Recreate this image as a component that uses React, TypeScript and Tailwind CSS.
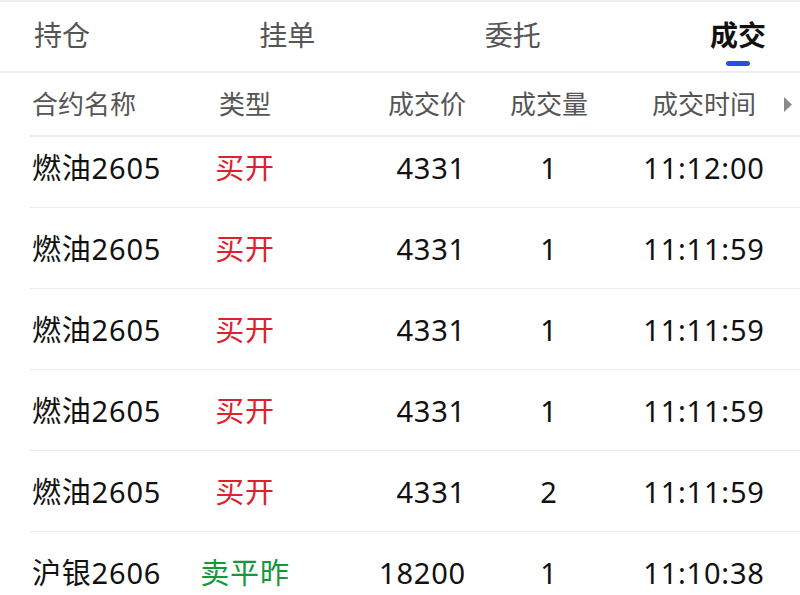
type Trade = { name: string; side: string; buy: boolean; price: string; qty: string; time: string };

const tabs = ['持仓', '挂单', '委托', '成交'];

const trades: Trade[] = [
  { name: '燃油2605', side: '买开', buy: true, price: '4331', qty: '1', time: '11:12:00' },
  { name: '燃油2605', side: '买开', buy: true, price: '4331', qty: '1', time: '11:11:59' },
  { name: '燃油2605', side: '买开', buy: true, price: '4331', qty: '1', time: '11:11:59' },
  { name: '燃油2605', side: '买开', buy: true, price: '4331', qty: '1', time: '11:11:59' },
  { name: '燃油2605', side: '买开', buy: true, price: '4331', qty: '2', time: '11:11:59' },
  { name: '沪银2606', side: '卖平昨', buy: false, price: '18200', qty: '1', time: '11:10:38' },
  { name: '沪银2606', side: '卖平昨', buy: false, price: '18200', qty: '1', time: '11:10:38' },
];

export default function App() {
  return (
    <div className="h-[595px] w-[800px] overflow-hidden bg-white font-['Noto_Sans','Noto_Sans_CJK_SC',sans-serif]">
      {/* tabs */}
      <div className="flex h-[73px] items-center justify-between border-y-2 border-[#ededed] px-[34px]">
        {tabs.map((t, i) => {
          const active = i === tabs.length - 1;
          return (
            <div key={t} className="relative">
              <span className={`text-[28px] leading-none ${active ? 'font-bold text-[#111]' : 'text-[#555]'}`}>{t}</span>
              {active && (
                <span className="absolute left-1/2 top-[40px] h-[5px] w-[24px] -translate-x-1/2 rounded-full bg-[#2a4fe0]" />
              )}
            </div>
          );
        })}
      </div>

      {/* column header */}
      <div className="ml-[30px] flex h-[64px] items-center border-b-2 border-[#ececec] text-[26px] text-[#555]">
        <div className="w-[150px] pl-[2px]">合约名称</div>
        <div className="w-[130px] text-center">类型</div>
        <div className="w-[156px] text-right">成交价</div>
        <div className="w-[166px] text-center">成交量</div>
        <div className="w-[144px] text-center">成交时间</div>
        <svg width="8" height="15" viewBox="0 0 8 15" className="ml-[8px]">
          <path d="M0 0 L8 7.5 L0 15 Z" fill="#8a8a8a" />
        </svg>
      </div>

      {/* rows */}
      <div className="overflow-hidden">
        <div className="-mt-[10px]">
          {trades.map((r, i) => (
            <div
              key={i}
              className="ml-[30px] flex h-[81px] items-center border-b border-[#ececec] pt-[1px] text-[29px] tracking-[0.8px] text-[#111]"
            >
              <div className="w-[150px] pl-[2px]">{r.name}</div>
              <div className={`w-[130px] text-center ${r.buy ? 'text-[#e0202e]' : 'text-[#16973a]'}`}>{r.side}</div>
              <div className="w-[156px] text-right">{r.price}</div>
              <div className="w-[166px] text-center">{r.qty}</div>
              <div className="w-[144px] text-center">{r.time}</div>
            </div>
          ))}
        </div>
      </div>
    </div>
  );
}
